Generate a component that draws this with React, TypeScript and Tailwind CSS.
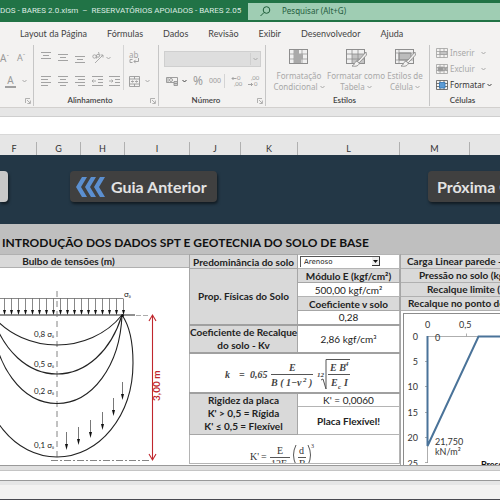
import type { ReactNode } from "react";

const uiFont = "font-['Noto_Sans','Open_Sans',sans-serif]";
const sheetFont = "font-['Lato','Open_Sans',sans-serif]";

function Caret({ dark = false }: { dark?: boolean }) {
  return (
    <svg width="5" height="4" viewBox="0 0 5 4" className={dark ? "text-[#444]" : "text-[#a8a8a8]"}>
      <path d="M.5 1l2 2 2-2" fill="none" stroke="currentColor" />
    </svg>
  );
}

function Launcher() {
  return (
    <button aria-label="Mais opções" className="text-[#a0a0a0]">
      <svg width="6" height="6" viewBox="0 0 6 6" fill="none" stroke="currentColor" strokeWidth=".8">
        <path d="M.5 5V.5H5M2 2l3 3M5.4 2.5v3h-3" />
      </svg>
    </button>
  );
}

function Lines({ rows, label, shift = 0 }: { rows: number[][]; label: string; shift?: number }) {
  return (
    <button aria-label={label} className="text-[#a3a3a3]">
      <svg width="11" height="14" viewBox="0 0 11 14" stroke="currentColor">
        {rows.map(([x1, x2], i) => (
          <path key={i} d={`M${x1} ${2.5 + shift + i * 3}H${x2}`} />
        ))}
      </svg>
    </button>
  );
}

function IndentIcon({ flip = false }: { flip?: boolean }) {
  return (
    <button aria-label={flip ? "Aumentar recuo" : "Diminuir recuo"} className="text-[#a3a3a3]">
      <svg width="11" height="14" viewBox="0 0 11 14" stroke="currentColor" fill="none">
        <path d="M0 2.5h11M6 5.500h5M6 8.500h5M0 11.500h11" />
        <path d={flip ? "M0 7h4M2.500 5.500L4 7 2.500 8.500" : "M0 7h4M1.500 5.500L0 7l1.500 1.500"} strokeWidth=".9" />
      </svg>
    </button>
  );
}

function Group({ label, width, launcher, children }: { label: string; width: string; launcher?: boolean; children: ReactNode }) {
  return (
    <section className={`flex h-[61px] shrink-0 flex-col border-r border-[#c6c6c6] ${width}`}>
      <div className="h-[50px]">{children}</div>
      <div className="flex h-[11px] items-center pr-[2px]">
        <span className="flex-1 pr-1 text-center font-['Lato',sans-serif] text-[8px] leading-[11px] font-semibold text-[#444]">{label}</span>
        {launcher && <Launcher />}
      </div>
    </section>
  );
}

function StyleIcon({ brush, kind }: { brush?: boolean; kind: number }) {
  return (
    <svg width="22" height="19" viewBox="0 0 22 19" fill="none" stroke="#8e8e8e">
      <rect x="1.500" y="1.500" width="18" height="14" fill="#f0f0f0" />
      {kind === 0 && (
        <>
          <path d="M1.500 6h18M1.500 11h18M6 1.500v14M14 1.500v14" strokeWidth=".7" />
          <path d="M6 2h5v4H6zM6 6h9v5H6zM6 11h7v4H6z" fill="#a9a9a9" stroke="none" />
        </>
      )}
      {kind === 1 && (
        <>
          <path d="M7 6h12v9H7z" fill="#c4c4c4" stroke="none" />
          <path d="M1.500 6h18M1.500 11h18M7 1.500v14M13 1.500v14" strokeWidth=".8" />
        </>
      )}
      {kind === 2 && (
        <>
          <path d="M5 5h12v7H5z" fill="#bcbcbc" />
          <path d="M1.500 5h18M5 1.500v14M1.500 12h18" strokeWidth=".7" />
        </>
      )}
      {brush && (
        <>
          <path d="M21 4l-7 8-3 1.500c-2 1-1 3.500-4 4.500 4 .8 7 0 7.500-3.500L21.500 7z" fill="#f3f2f1" strokeWidth=".9" />
          <path d="M11.500 13l3 2" />
        </>
      )}
    </svg>
  );
}

function StyleButton({ first, second, width, kind, brush }: { first: string; second: string; width: string; kind: number; brush?: boolean }) {
  return (
    <button className={`flex flex-col items-center text-[8px] leading-[11px] whitespace-nowrap text-[#a8a8a8] ${width}`}>
      <StyleIcon kind={kind} brush={brush} />
      <span className="mt-[3px]">{first}</span>
      <span className="flex items-center gap-[2px]">
        {second}
        <Caret />
      </span>
    </button>
  );
}

function CellButton({ label, kind }: { label: string; kind: number }) {
  const active = kind === 2;
  const stroke = active ? "#555" : "#a0a0a0";
  return (
    <button className={`flex h-4 items-center gap-[2px] text-[8px] leading-[14px] ${active ? "text-[#333]" : "text-[#a8a8a8]"}`}>
      <svg width="12" height="12" viewBox="0 0 12 12" fill="none" stroke={stroke} strokeWidth=".8">
        <path d="M.5 1.500h11v9H.5zM.5 4.500h11M.5 7.500h11M4 1.500v9M8 1.500v9" />
        {kind === 0 && <path d="M4 4.500h7v3H4z" fill="#c4c4c4" />}
        {kind === 1 && (
          <>
            <path d="M2 4h5v4H2z" fill="#999" />
            <path d="M7.500 4l4 4M11.500 4l-4 4" strokeWidth="1.200" />
          </>
        )}
        {kind === 2 && <path d="M3.500 3.500h5.500v5.500H3.500z" fill="#5b9bd5" stroke="#2f75b5" />}
      </svg>
      {label}
      <span className={active ? "" : "pl-1"}>
        <Caret dark={active} />
      </span>
    </button>
  );
}

function Ribbon() {
  return (
    <div className="flex overflow-hidden border-b border-[#d2d0ce] pb-[1px]">
      <Group label="" width="w-[34px]" launcher>
        <div className="flex h-[26px] items-center gap-2 text-[#9a9a9a]">
          <button className="text-[10px]">A<sup className="text-[6px]">ˆ</sup></button>
          <button className="text-[9px]">A<sup className="text-[6px]">ˇ</sup></button>
        </div>
        <div className="flex h-5 items-center gap-[6px] pl-[5px] text-[#9a9a9a]">
          <button aria-label="Cor da fonte" className="h-[13px] w-[11px] border-b-2 border-[#a0a0a0] text-center text-[10px] leading-[11px]">A</button>
          <Caret />
        </div>
      </Group>

      <Group label="Alinhamento" width="w-[125px]" launcher>
        <div className="flex pl-[7px]">
          <div className="h-[45px] w-[83px] border-r border-[#d4d4d4]">
            <div className="flex h-[26px] items-center gap-[6px]">
              <Lines label="Alinhar em cima" rows={[[0, 10], [2, 8], [0, 10]]} shift={-1} />
              <Lines label="Alinhar no meio" rows={[[0, 10], [2, 8], [0, 10]]} shift={1} />
              <Lines label="Alinhar embaixo" rows={[[0, 10], [2, 8], [0, 10]]} shift={3} />
              <button aria-label="Orientação" className="flex items-center gap-[2px]">
                <svg width="12" height="12" viewBox="0 0 12 12" fill="none" stroke="#a3a3a3" strokeWidth=".9">
                  <path d="M3 11l8-8M8.500 3H11v2.500" />
                  <circle cx="2.500" cy="4.500" r="1.700" />
                  <circle cx="6" cy="3.800" r="1.500" />
                  <path d="M4.500 3v3.500M6.500 0l1 3.500" />
                </svg>
                <Caret />
              </button>
            </div>
            <div className="flex h-5 items-center gap-[6px]">
              <Lines label="Alinhar à esquerda" rows={[[0, 10], [0, 7], [0, 10], [0, 7]]} />
              <Lines label="Centralizar" rows={[[0, 10], [2, 8], [0, 10], [2, 8]]} />
              <Lines label="Alinhar à direita" rows={[[0, 10], [3, 10], [0, 10], [3, 10]]} />
              <IndentIcon />
              <IndentIcon flip />
            </div>
          </div>
          <div className="pl-[5px]">
            <div className="flex h-[26px] items-center text-[#a3a3a3]">
              <button aria-label="Quebrar texto" className="flex flex-col items-start text-[8px] leading-[6px]">
                ab
                <svg width="11" height="6" viewBox="0 0 11 6" fill="none" stroke="currentColor">
                  <path d="M3.500 1.500H1v3h2.500M9.500 0v3.500H5M6.500 1.800L5 3.500l1.500 1.700" />
                </svg>
              </button>
            </div>
            <div className="flex h-5 items-center gap-[5px]">
              <button aria-label="Mesclar e centralizar">
                <svg width="11" height="11" viewBox="0 0 11 11" fill="none" stroke="#999" strokeWidth=".9">
                  <path d="M.5.5h10v10H.5zM.5 3h10M.5 8h10M5.500.5V3M5.500 8v2.500M2 5.500h2.500M9 5.500H6.500M3.500 4.500l1 1-1 1M7.500 4.500l-1 1 1 1" />
                </svg>
              </button>
              <Caret />
            </div>
          </div>
        </div>
      </Group>

      <Group label="Número" width="w-[107px]" launcher>
        <div className="flex flex-col pl-[5px]">
          <div className="flex h-[28px] items-center">
            <button aria-label="Formato de número" className="flex h-4 w-[97px] items-center justify-end border border-[#cfcfcf] bg-[#dedede] pr-[2px]">
              <span className="flex h-3 items-center border-l border-[#cfcfcf] pl-[2px]"><Caret /></span>
            </button>
          </div>
          <div className="flex h-4 items-center text-[#9a9a9a]">
            <button aria-label="Formato contábil" className="ml-[2px]">
              <svg width="12" height="10" viewBox="0 0 12 10" fill="none" stroke="#949494" strokeWidth=".9">
                <path d="M.5 1.500h11v5H.5z" />
                <circle cx="5" cy="4" r="1.500" />
                <path d="M8 5.500h3.500v4H8zM8 7.500h3.500M2 1.500v5" fill="#cfcfcf" />
              </svg>
            </button>
            <span className="w-[15px] pl-1"><Caret dark /></span>
            <button className="w-4 text-left text-[12px] leading-[14px]">%</button>
            <button className="w-[16px] border-r border-[#d4d4d4] text-left text-[7px] leading-[14px]">000</button>
            <button aria-label="Aumentar casas decimais" className="flex w-[19px] flex-col items-start pl-[6px] font-['Lato',sans-serif] text-[6px] leading-[6px]">
              <span className="flex items-center">
                <svg width="6" height="5" viewBox="0 0 6 5" fill="none" stroke="currentColor" strokeWidth=".9"><path d="M5.500 2.500H1M2.500 1L1 2.500 2.500 4" /></svg>
                0
              </span>
              <span className="pl-[3px]">,00</span>
            </button>
            <button aria-label="Diminuir casas decimais" className="flex flex-col items-start pl-1 font-['Lato',sans-serif] text-[6px] leading-[6px]">
              <span className="pl-[3px]">,00</span>
              <span className="flex items-center">
                <svg width="6" height="5" viewBox="0 0 6 5" fill="none" stroke="currentColor" strokeWidth=".9"><path d="M0 2.500h4.500M3 1l1.500 1.500L3 4" /></svg>
                0
              </span>
            </button>
          </div>
        </div>
      </Group>

      <Group label="Estilos" width="w-[164px]">
        <div className="flex pt-[3px] pl-[7px]">
          <StyleButton first="Formatação" second="Condicional" width="w-[52px]" kind={0} />
          <StyleButton first="Formatar como" second="Tabela" width="w-[62px]" kind={1} brush />
          <StyleButton first="Estilos de" second="Célula" width="w-[36px]" kind={2} brush />
        </div>
      </Group>

      <Group label="Células" width="w-[72px]">
        <div className="pl-[6px]">
          <CellButton label="Inserir" kind={0} />
          <CellButton label="Excluir" kind={1} />
          <CellButton label="Formatar" kind={2} />
        </div>
      </Group>
    </div>
  );
}

const tabs = ["Layout da Página", "Fórmulas", "Dados", "Revisão", "Exibir", "Desenvolvedor", "Ajuda"];

const columns = [
  { name: "F", size: "w-[37px] pr-[8px]" },
  { name: "G", size: "w-[44px]" },
  { name: "H", size: "w-[44px]" },
  { name: "I", size: "w-[65px]" },
  { name: "J", size: "w-[51px]" },
  { name: "K", size: "w-[57px]" },
  { name: "L", size: "w-[102px]" },
  { name: "M", size: "w-[70px]" },
];

const loadArrows = Array.from({ length: 18 }, (_, i) => 4 + i * 7);
const stressArrows = [[66, 164], [78, 159], [90, 152], [102, 144], [113, 130], [122, 114]];
const bulbLabels = [["0,8", 69], ["0,5", 99], ["0,2", 126], ["0,1", 180]] as const;

function BulbDiagram() {
  return (
    <svg width="189" height="197" viewBox="0 0 189 197" fill="none" className="block">
      <g stroke="#555" strokeWidth=".7">
        <path d="M0 30.500H123" />
        {loadArrows.map((x) => (
          <g key={x}>
            <path d={`M${x + 0.5} 30.500V44`} />
            <path d={`M${x - 1} 42h3l-1.500 5z`} fill="#111" stroke="none" />
          </g>
        ))}
      </g>
      <path d="M0 47H135" stroke="#222" strokeWidth="1.200" />
      <path d="M136 47.500h14" stroke="#888" strokeWidth=".7" strokeDasharray="5 2" />
      <path d="M57 23V189" stroke="#777" strokeWidth=".9" strokeDasharray="6 4" />
      <g stroke="#222" strokeWidth="1.100">
        <path d="M122 47C106 67 81 77 57 77S8 67-8 47" />
        <path d="M122 47C111 83 86 106 57 106S3 83-8 47" />
        <path d="M122 47C120 98 92 135.500 57 135.500S-6 98-8 47" />
        <path d="M122 47C129 57 133 73 133 95C133 148 99 189 57 189S-19 148-19 95" />
      </g>
      <circle cx="122.500" cy="47.500" r="1.500" fill="#111" />
      {stressArrows.map(([x, y]) => (
        <g key={x}>
          <path d={`M${x + 0.5} ${y}v14`} stroke="#555" strokeWidth=".8" />
          <path d={`M${x - 1} ${y + 12}h3l-1.500 6z`} fill="#111" />
        </g>
      ))}
      <g className="font-['Lato',sans-serif] text-[8px]" fill="#222">
        {bulbLabels.map(([text, y]) => (
          <text key={text} x="34" y={y}>
            {text} σ<tspan fontSize="6">₀</tspan>
          </text>
        ))}
        <text x="124" y="29">σ<tspan fontSize="6">₀</tspan></text>
      </g>
      <path d="M51 192.500H150" stroke="#666" strokeWidth=".8" strokeDasharray="7 2 2 2" />
      <path d="M152.500 48V191M149 53l3.500-6 3.500 6M149 186l3.500 6 3.500-6" stroke="#c0272d" strokeWidth="1.100" />
      <text transform="translate(160 133) rotate(-90)" fill="#c0272d" className="font-['Lato',sans-serif] text-[10px] font-bold">
        3,00 m
      </text>
    </svg>
  );
}

function StiffnessFormula() {
  return (
    <svg width="207" height="38" viewBox="0 0 207 38" fill="#444" className="block">
      <g className="font-['Liberation_Serif',serif] text-[10px] font-bold italic">
        <text x="35" y="24">k</text>
        <text x="49" y="24">=</text>
        <text x="60" y="24">0,65</text>
        <text x="99" y="17">E</text>
        <text x="81" y="32">B ( 1−v</text>
        <text x="113" y="28" fontSize="7">2</text>
        <text x="119" y="32">)</text>
        <text x="127" y="23" fontSize="7">12</text>
        <text x="140" y="17">E B</text>
        <text x="155" y="12" fontSize="7">4</text>
        <text x="141" y="32">E</text>
        <text x="148" y="35" fontSize="7">c</text>
        <text x="154" y="32">I</text>
      </g>
      <path d="M81 20.500h42M138 20.500h22M131 26l2-1 3 10V5.500h24" fill="none" stroke="#555" />
    </svg>
  );
}

function RatioFormula() {
  return (
    <svg width="207" height="28" viewBox="0 0 207 28" fill="#333" className="block">
      <g className="font-['Liberation_Serif',serif] text-[10px]">
        <text x="60" y="25">K'</text>
        <text x="71" y="25">=</text>
        <text x="87" y="19">E</text>
        <text x="81" y="32">12E</text>
        <text x="109" y="19">d</text>
        <text x="109" y="32">B</text>
        <text x="121" y="13" fontSize="6">3</text>
      </g>
      <path d="M80 22.500h20M108 22.500h8M106 10q-5 10 0 20M118 10q5 10 0 20" fill="none" stroke="#444" strokeWidth=".9" />
    </svg>
  );
}

const axisValues = [["0", 27], ["5", 52], ["10", 77], ["15", 103], ["20", 128], ["25", 154]] as const;

function PressureChart() {
  return (
    <svg width="240" height="152" viewBox="0 0 240 152" fill="none" className="block">
      <path d="M23.500 22.500V149M23.500 22.500H240M62.500 19.500v3M21 47.500h3M21 72.500h3M21 98.500h3M21 123.500h3M21 148.500h3" stroke="#999" strokeWidth=".8" />
      <path d="M240 22.500H74.500L23.500 132V22" stroke="#4a7399" strokeWidth="2" />
      <g className="font-['Lato',sans-serif] text-[9px]" fill="#333">
        <text x="21" y="14">0</text>
        <text x="55" y="14">0,5</text>
        <text x="31" y="27">0</text>
        {axisValues.map(([text, y]) => (
          <text key={text} x="14" y={y - 1} textAnchor="end">{text}</text>
        ))}
        <text x="31" y="131">21,750</text>
        <text x="31" y="141">kN/m²</text>
        <text x="77" y="154" className="font-bold" fill="#111">Pressão</text>
      </g>
    </svg>
  );
}

function SoilTable() {
  const head = "border border-[#a6a6a6] bg-[#d9d9d9] p-0 font-bold";
  const cell = "border border-[#b4b4b4] bg-white p-0 text-center";
  return (
    <table className="w-[211px] shrink-0 table-fixed border-collapse text-[10px] leading-[12px] whitespace-nowrap text-[#222]">
      <colgroup>
        <col className="w-[108px]" />
        <col />
      </colgroup>
      <tbody>
        <tr className="h-[14px]">
          <th className={head}><label htmlFor="soil">Predominância do solo</label></th>
          <td className={cell}>
            <div className="relative ml-[2px] h-[11px] w-[80px]">
              <select id="soil" className="block h-[11px] w-full appearance-none border-t border-l border-[#555] pl-[3px] font-['DejaVu_Sans',sans-serif] text-[7px] leading-[9px]">
                <option>Arenoso</option>
              </select>
              <span className="pointer-events-none absolute top-[1px] right-0 flex h-[9px] w-2 items-center justify-center border-r border-b border-[#333] bg-[#eee]">
                <svg width="5" height="3" viewBox="0 0 5 3"><path d="M0 0h5L2.500 3z" fill="#111" /></svg>
              </span>
            </div>
          </td>
        </tr>
        <tr className="h-[14px]">
          <th rowSpan={4} className={head}>Prop. Físicas do Solo</th>
          <th className={head}>Módulo E (kgf/cm²)</th>
        </tr>
        <tr className="h-[14px]"><td className={cell}>500,00 kgf/cm²</td></tr>
        <tr className="h-[14px]"><th className={head}>Coeficiente v solo</th></tr>
        <tr className="h-[14px]"><td className={cell}>0,28</td></tr>
        <tr className="h-[27px] border-t-2 border-[#a0a0a0]">
          <th className={`${head} leading-[13px]`}>Coeficiente de Recalque<br />do solo - Kv</th>
          <td className={cell}>2,86 kgf/cm³</td>
        </tr>
        <tr className="border-t-2 border-[#a0a0a0]">
          <td colSpan={2} className={cell}><StiffnessFormula /></td>
        </tr>
        <tr className="h-[14px] border-t-2 border-[#a0a0a0]">
          <th rowSpan={2} className={`${head} leading-[13px]`}>Rigidez da placa<br />K' &gt; 0,5 = Rígida<br />K' ≤ 0,5 = Flexível</th>
          <td className={cell}>K' = 0,0060</td>
        </tr>
        <tr className="h-[28px]"><td className={`${cell} font-bold`}>Placa Flexível!</td></tr>
        <tr className="h-[28px]"><td colSpan={2} className={cell}><RatioFormula /></td></tr>
      </tbody>
    </table>
  );
}

export default function App() {
  return (
    <div className={`w-full overflow-hidden bg-[#f3f2f1] ${uiFont}`}>
      <header className="flex h-[22px] items-center bg-[#217346] text-[8px] whitespace-nowrap text-[#dcebe2]">
        <h1 className="w-[248px] shrink-0 font-['Roboto',sans-serif]">DOS - BARES 2.0.xlsm&nbsp; –&nbsp; RESERVATÓRIOS APOIADOS - BARES 2.05</h1>
        <label className="flex h-[17px] flex-1 items-center gap-[11px] bg-[#9fcdb3] pl-3">
          <svg width="11" height="11" viewBox="0 0 11 11" fill="none" stroke="#1e5c3a">
            <circle cx="6.500" cy="4" r="3.300" />
            <path d="M4 6.500L.5 10" />
          </svg>
          <input aria-label="Pesquisar" placeholder="Pesquisar (Alt+G)" className="min-w-0 flex-1 bg-transparent outline-none placeholder:text-[#245c3d]" />
        </label>
      </header>

      <nav className="flex h-[23px] items-center gap-5 pl-5 font-['Lato',sans-serif] text-[9px] whitespace-nowrap text-[#444]">
        {tabs.map((tab) => (
          <button key={tab}>{tab}</button>
        ))}
      </nav>
      <Ribbon />

      <div className="h-[9px] border-b border-[#cfcfcf] bg-[#e6e6e6]" />
      <input aria-label="Barra de fórmulas" className="block h-[17px] w-full bg-white outline-none" />
      <div className={`flex h-[21px] overflow-hidden border-t border-[#d8d8d8] bg-[#e6e6e6] pt-[7px] text-[9px] leading-[13px] text-[#333] ${sheetFont}`}>
        {columns.map((column) => (
          <div key={column.name} className={`shrink-0 border-r border-[#b0b0b0] text-center ${column.size}`}>{column.name}</div>
        ))}
      </div>

      <main className={sheetFont}>
        <div className="flex h-[69px] items-start overflow-hidden bg-[#233746] pt-[16px] text-[16px] font-bold whitespace-nowrap text-[#e3e3e3]">
          <button aria-label="Início" className="h-[31px] w-2 shrink-0 rounded-r-[4px] bg-[#c8c8c8] shadow-[1px_2px_3px_#0008]" />
          <button className="ml-[62px] flex h-[31px] w-[147px] shrink-0 items-center gap-[6px] rounded-[4px] bg-[#404040] pl-[6px] shadow-[1px_2px_3px_#0008]">
            <svg width="29" height="20" viewBox="0 0 29 20" fill="#5b8fd0">
              <path d="M6 0h5L5 10l6 10H6L0 10zM15 0h5l-6 10 6 10h-5L9 10zM24 0h5l-6 10 6 10h-5l-6-10z" />
            </svg>
            Guia Anterior
          </button>
          <button className="ml-[211px] h-[31px] w-[147px] shrink-0 rounded-[4px] bg-[#404040] pl-[9px] text-left shadow-[1px_2px_3px_#0008]">Próxima Guia</button>
        </div>

        <h2 className="h-[30px] overflow-hidden bg-[#bfbfbf] pt-[9px] pl-[2px] text-[12px] leading-[20px] font-bold whitespace-nowrap text-[#111]">
          INTRODUÇÃO DOS DADOS SPT E GEOTECNIA DO SOLO DE BASE
        </h2>

        <div className="flex h-[212px] items-start overflow-hidden border-b border-[#999] bg-white">
          <section className="w-[189px] shrink-0">
            <h3 className="h-[14px] border-y border-[#b0b0b0] bg-[#d9d9d9] pr-[52px] text-center text-[10px] leading-[12px] font-bold text-[#222]">Bulbo de tensões (m)</h3>
            <BulbDiagram />
          </section>
          <SoilTable />
          <section className="min-w-0 flex-1 overflow-hidden border-l border-[#a6a6a6] text-[10px] leading-[13px] font-bold whitespace-nowrap text-[#222]">
            <div className="border-y border-[#b0b0b0] bg-[#d9d9d9] pl-[6px]">Carga Linear parede - G</div>
            <div className="border-b border-[#b0b0b0] bg-[#d9d9d9] pl-[18px]">Pressão no solo (kgf</div>
            <div className="border-b border-[#b0b0b0] bg-[#d9d9d9] pl-[26px]">Recalque limite (mm)</div>
            <div className="border-b border-[#b0b0b0] bg-[#d9d9d9] pl-[7px]">Recalque no ponto de</div>
            <div className="mt-[2px] ml-[2px] border-t border-l border-[#8c8c8c] font-normal">
              <PressureChart />
            </div>
          </section>
        </div>
      </main>

      <div className="h-[5px] border-b border-[#c4c4c4] bg-[#e0e0e0]" />
      <div className="h-[9px] bg-white" />
      <div className="h-[5px] border-t border-[#999] bg-[#e6e6e6]" />
      <footer className="h-[16px] border-b-2 border-[#4a4a50] bg-[#f3f2f1]" />
    </div>
  );
}
